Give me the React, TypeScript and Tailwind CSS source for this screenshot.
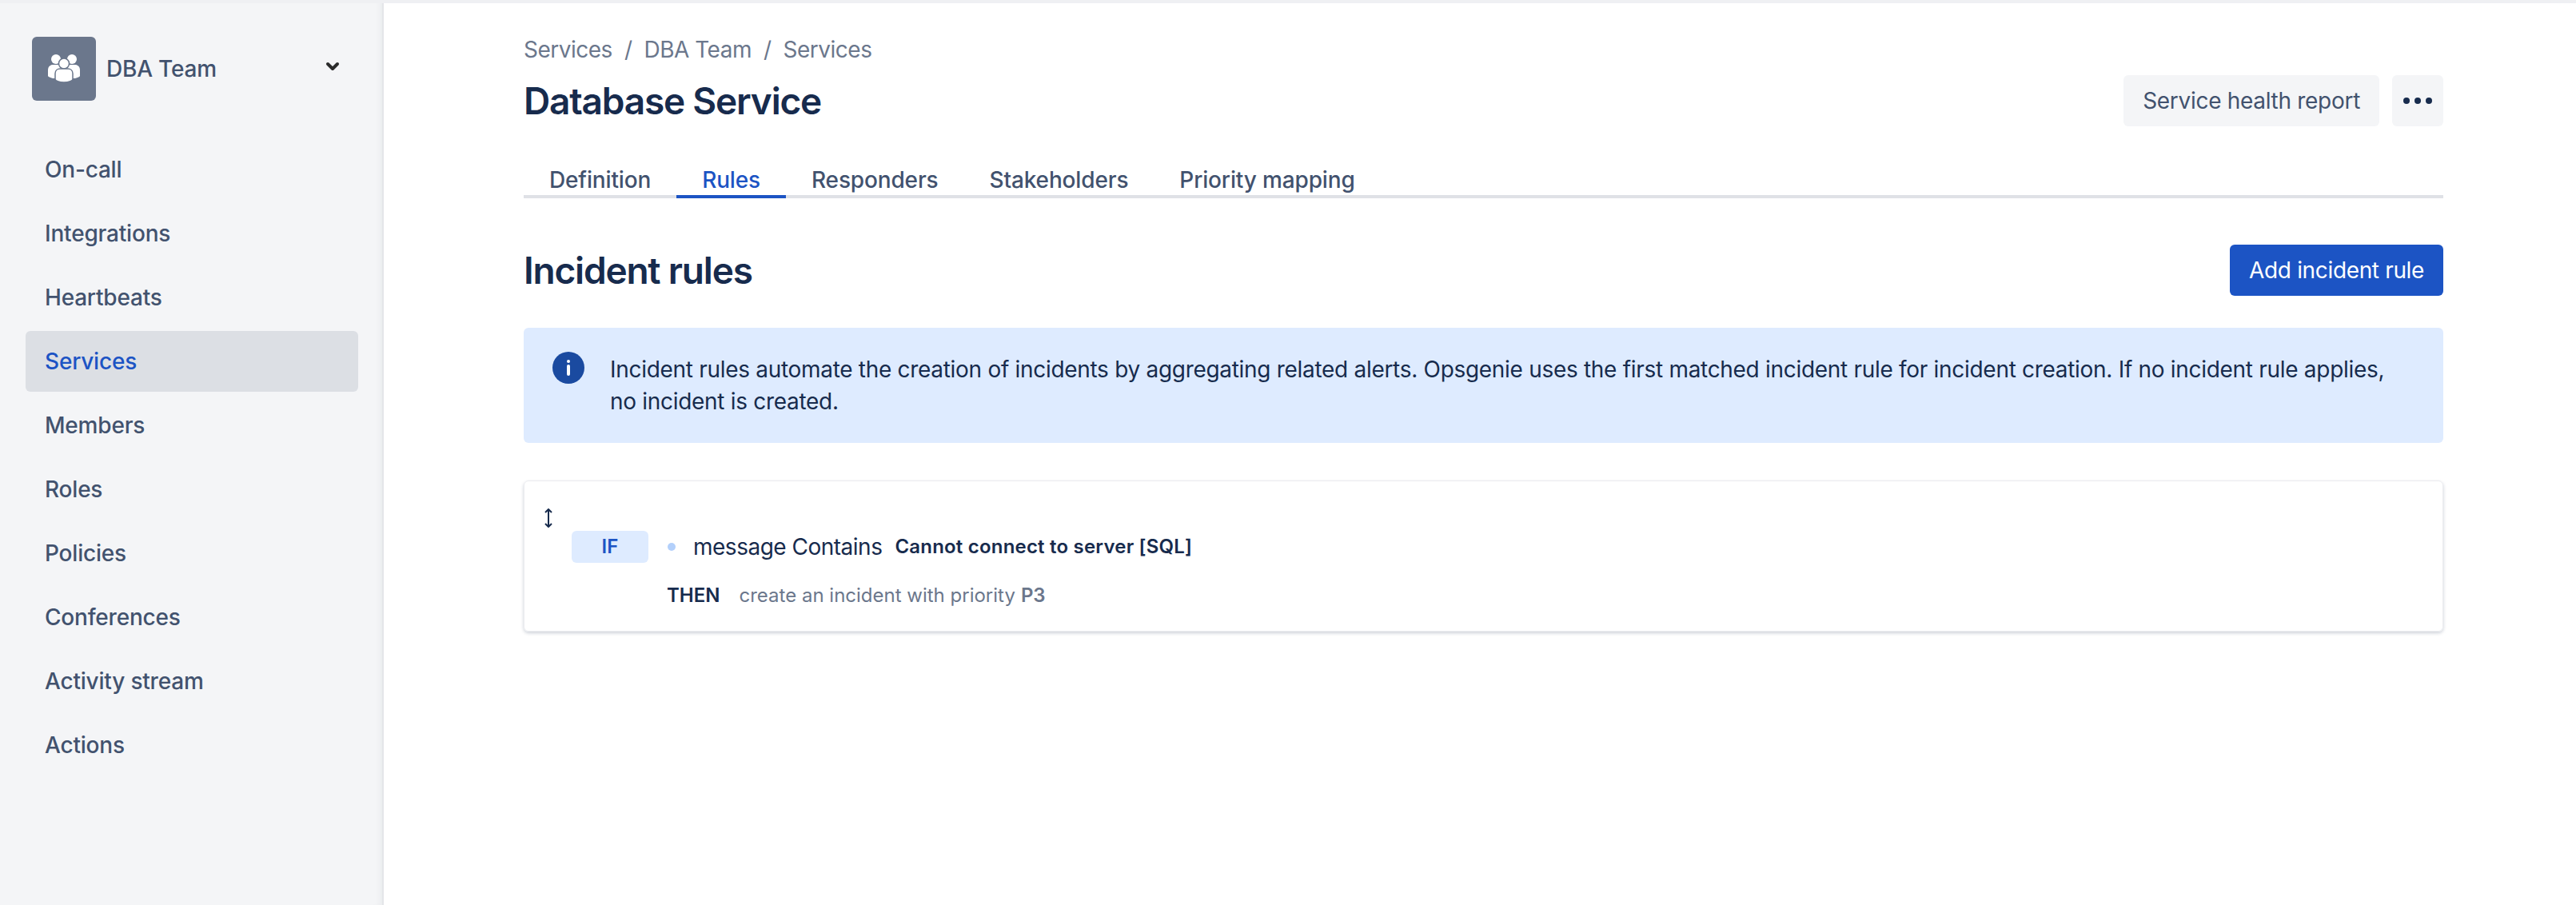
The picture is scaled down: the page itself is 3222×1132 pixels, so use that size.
import { ChevronDown } from 'lucide-react';

const navItems = ['On-call', 'Integrations', 'Heartbeats', 'Services', 'Members', 'Roles', 'Policies', 'Conferences', 'Activity stream', 'Actions'];
const tabs = ['Definition', 'Rules', 'Responders', 'Stakeholders', 'Priority mapping'];

function TeamIcon() {
  return (
    <svg viewBox="0 0 40 36" className="w-10 h-9" fill="#fff">
      <circle cx="10" cy="6" r="6" />
      <circle cx="30" cy="6" r="6" />
      <path d="M0 20c0-5 3-7 6-7h28c3 0 6 2 6 7v7c0 1-3 2-6 3H6c-3-1-6-2-6-3z" />
      <circle cx="20" cy="11.5" r="6.5" stroke="#6b778c" strokeWidth="1.5" />
      <path d="M9 24c0-4 3-6 6-6h10c3 0 6 2 6 6v7c0 2-5 4-11 4s-11-2-11-4z" stroke="#6b778c" strokeWidth="1.5" />
    </svg>
  );
}

export default function App() {
  return (
    <div className="relative flex w-[3222px] h-[1132px] overflow-hidden bg-white font-['Inter',sans-serif] text-[28px] text-[#172b4d]">
      <div className="absolute top-0 left-0 right-0 h-1 bg-[#eff0f3] z-10" />
      <aside className="w-[480px] shrink-0 bg-[#f4f5f7] border-r-2 border-[#e4e5e9] shadow-[inset_-8px_0_8px_-6px_rgba(9,30,66,0.05)] pt-[46px] pl-8 pr-[30px]">
        <div className="flex items-center pl-2 pr-[20px]">
          <div className="w-20 h-20 rounded-md bg-[#6b778c] flex items-center justify-center">
            <TeamIcon />
          </div>
          <span className="ml-[13px] font-medium text-[#42526e] tracking-[-0.2px]">DBA Team</span>
          <ChevronDown className="ml-auto mb-[6px] w-6 h-6 text-[#2b2b2b]" strokeWidth={4} />
        </div>
        <nav className="mt-[48px] flex flex-col gap-1">
          {navItems.map(item => (
            <div
              key={item}
              className={`h-[76px] flex items-center pl-[24px] rounded-md font-medium tracking-[-0.2px] ${item === 'Services' ? 'bg-[#dcdfe4] text-[#1c54c4]' : 'text-[#42526e]'}`}
            >
              {item}
            </div>
          ))}
        </nav>
      </aside>

      <main className="w-[2401px] ml-[175px] pt-[44px]">
        <div className="flex items-center h-9 text-[#6b778c] tracking-[-0.5px]">
          <span>Services</span>
          <span className="mx-[15px]">/</span>
          <span>DBA Team</span>
          <span className="mx-[15px]">/</span>
          <span>Services</span>
        </div>
        <div className="mt-[14px] flex items-center justify-between">
          <h1 className="text-[46px] leading-[64px] font-semibold tracking-[-1.2px]">Database Service</h1>
          <div className="flex gap-4">
            <button className="h-16 px-6 rounded-md bg-[#f4f5f7] text-[#42526e] tracking-[-0.3px]">Service health report</button>
            <button className="w-16 h-16 rounded-md bg-[#f4f5f7] flex items-center justify-center gap-[6px]">
              <span className="w-2 h-2 rounded-full bg-[#172b4d]" />
              <span className="w-2 h-2 rounded-full bg-[#172b4d]" />
              <span className="w-2 h-2 rounded-full bg-[#172b4d]" />
            </button>
          </div>
        </div>

        <div className="mt-[50px] flex border-b-4 border-[#dfe1e6] h-[40px]">
          {tabs.map(tab => (
            <div
              key={tab}
              className={`px-8 h-[40px] -mb-1 flex items-start leading-[34px] font-medium tracking-[-0.15px] border-b-4 ${tab === 'Rules' ? 'text-[#1c54c4] border-[#1c54c4]' : 'text-[#42526e] border-transparent'}`}
            >
              {tab}
            </div>
          ))}
        </div>

        <div className="mt-[58px] flex items-center justify-between">
          <h2 className="text-[46px] leading-[64px] font-semibold tracking-[-1.2px]">Incident rules</h2>
          <button className="h-16 px-6 rounded-md bg-[#1c54c4] text-white tracking-[-0.35px]">Add incident rule</button>
        </div>

        <div className="mt-10 flex rounded-md bg-[#deebff] pt-[30px] pl-9 pr-9 h-[144px]">
          <span className="w-10 h-10 shrink-0 rounded-full bg-[#1a4aa0] flex flex-col items-center justify-center gap-[2px]">
            <span className="w-1 h-1 bg-white rounded-full" />
            <span className="w-1 h-[14px] bg-white rounded-full" />
          </span>
          <p className="ml-[32px] mt-[2px] leading-[40px] tracking-[-0.3px]">
            Incident rules automate the creation of incidents by aggregating related alerts. Opsgenie uses the first matched incident rule for incident creation. If no incident rule applies, no incident is created.
          </p>
        </div>

        <div className="mt-[47px] h-[189px] rounded-md border border-[#ebecf0] shadow-[0_2px_4px_rgba(9,30,66,0.2)] pl-[24px] pt-[34px]">
          <svg viewBox="0 0 12 24" className="w-3 h-6" fill="none" stroke="#172b4d" strokeWidth="2">
            <path d="M6 1v22M2 5l4-4 4 4M2 19l4 4 4-4" />
          </svg>
          <div className="ml-[35px] mt-[3px] flex items-center">
            <span className="w-24 h-10 rounded-md bg-[#deebff] text-[#1c54c4] text-2xl font-semibold flex items-center justify-center">IF</span>
            <span className="ml-6 w-[10px] h-[10px] rounded-full bg-[#b3d0fb]" />
            <span className="ml-[22px] tracking-[-0.5px]">message Contains</span>
            <span className="ml-4 text-2xl font-semibold tracking-[0.2px]">Cannot connect to server [SQL]</span>
          </div>
          <div className="ml-[154px] mt-6 flex items-center text-2xl">
            <span className="font-semibold">THEN</span>
            <span className="ml-6 text-[#6b778c]">create an incident with priority</span>
            <span className="ml-[7px] font-semibold text-[#6b778c]">P3</span>
          </div>
        </div>
      </main>
    </div>
  );
}
